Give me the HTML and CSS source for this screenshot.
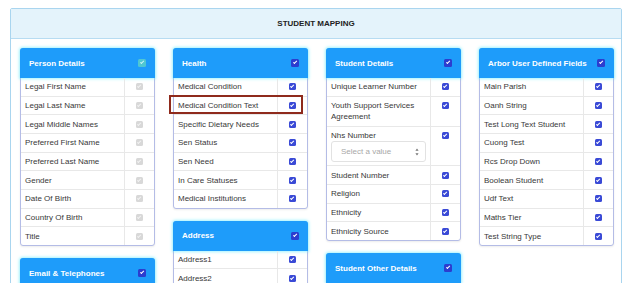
FILE: index.html
```html
<!DOCTYPE html>
<html lang="en">
<head>
    <meta charset="UTF-8">
    <meta name="viewport" content="width=device-width, initial-scale=1.0">
    <title>Student Mapping</title>
    <link rel="stylesheet" href="styles.css">
</head>
<body>
    <div class="panel">
        <div class="panel-head">STUDENT MAPPING</div>
        <div class="panel-body">

            <div class="column">
                <div class="card">
                    <div class="card-head"><span>Person Details</span><span class="cb teal"></span></div>
                    <table class="fields">
                        <tr><td>Legal First Name</td><td class="tick"><span class="cb off"></span></td></tr>
                        <tr><td>Legal Last Name</td><td class="tick"><span class="cb off"></span></td></tr>
                        <tr><td>Legal Middle Names</td><td class="tick"><span class="cb off"></span></td></tr>
                        <tr><td>Preferred First Name</td><td class="tick"><span class="cb off"></span></td></tr>
                        <tr><td>Preferred Last Name</td><td class="tick"><span class="cb off"></span></td></tr>
                        <tr><td>Gender</td><td class="tick"><span class="cb off"></span></td></tr>
                        <tr><td>Date Of Birth</td><td class="tick"><span class="cb off"></span></td></tr>
                        <tr><td>Country Of Birth</td><td class="tick"><span class="cb off"></span></td></tr>
                        <tr><td>Title</td><td class="tick"><span class="cb off"></span></td></tr>
                    </table>
                </div>
                <div class="card">
                    <div class="card-head"><span>Email &amp; Telephones</span><span class="cb"></span></div>
                </div>
            </div>

            <div class="column">
                <div class="card">
                    <div class="card-head"><span>Health</span><span class="cb"></span></div>
                    <table class="fields">
                        <tr><td>Medical Condition</td><td class="tick"><span class="cb"></span></td></tr>
                        <tr><td class="hl">Medical Condition Text</td><td class="tick"><span class="cb"></span></td></tr>
                        <tr><td>Specific Dietary Needs</td><td class="tick"><span class="cb"></span></td></tr>
                        <tr><td>Sen Status</td><td class="tick"><span class="cb"></span></td></tr>
                        <tr><td>Sen Need</td><td class="tick"><span class="cb"></span></td></tr>
                        <tr><td>In Care Statuses</td><td class="tick"><span class="cb"></span></td></tr>
                        <tr><td>Medical Institutions</td><td class="tick"><span class="cb"></span></td></tr>
                    </table>
                </div>
                <div class="card">
                    <div class="card-head"><span>Address</span><span class="cb"></span></div>
                    <table class="fields">
                        <tr><td>Address1</td><td class="tick"><span class="cb"></span></td></tr>
                        <tr><td>Address2</td><td class="tick"><span class="cb"></span></td></tr>
                    </table>
                </div>
            </div>

            <div class="column">
                <div class="card">
                    <div class="card-head"><span>Student Details</span><span class="cb"></span></div>
                    <table class="fields">
                        <tr><td>Unique Learner Number</td><td class="tick"><span class="cb"></span></td></tr>
                        <tr><td>Youth Support Services Agreement</td><td class="tick"><span class="cb"></span></td></tr>
                        <tr>
                            <td>Nhs Number
                                <div class="select">
                                    <span>Select a value</span>
                                    <svg width="4" height="8" viewBox="0 0 4 8"><path d="M2 0.5 L3.6 2.8 H0.4 Z M2 7.5 L3.6 5.2 H0.4 Z" fill="#777"/></svg>
                                </div>
                            </td>
                            <td class="tick"><span class="cb"></span></td>
                        </tr>
                        <tr><td>Student Number</td><td class="tick"><span class="cb"></span></td></tr>
                        <tr><td>Religion</td><td class="tick"><span class="cb"></span></td></tr>
                        <tr><td>Ethnicity</td><td class="tick"><span class="cb"></span></td></tr>
                        <tr><td>Ethnicity Source</td><td class="tick"><span class="cb"></span></td></tr>
                    </table>
                </div>
                <div class="card">
                    <div class="card-head"><span>Student Other Details</span><span class="cb"></span></div>
                </div>
            </div>

            <div class="column">
                <div class="card">
                    <div class="card-head"><span>Arbor User Defined Fields</span><span class="cb"></span></div>
                    <table class="fields">
                        <tr><td>Main Parish</td><td class="tick"><span class="cb"></span></td></tr>
                        <tr><td>Oanh String</td><td class="tick"><span class="cb"></span></td></tr>
                        <tr><td>Test Long Text Student</td><td class="tick"><span class="cb"></span></td></tr>
                        <tr><td>Cuong Test</td><td class="tick"><span class="cb"></span></td></tr>
                        <tr><td>Rcs Drop Down</td><td class="tick"><span class="cb"></span></td></tr>
                        <tr><td>Boolean Student</td><td class="tick"><span class="cb"></span></td></tr>
                        <tr><td>Udf Text</td><td class="tick"><span class="cb"></span></td></tr>
                        <tr><td>Maths Tier</td><td class="tick"><span class="cb"></span></td></tr>
                        <tr><td>Test String Type</td><td class="tick"><span class="cb"></span></td></tr>
                    </table>
                </div>
            </div>

        </div>
    </div>
</body>
</html>
```

FILE: styles.css
```css
body { margin: 0; height: 283px; overflow: hidden; font-family: "Liberation Sans", Arial, sans-serif; font-size: 8px; color: #383838; background: #fff; }

.panel { margin: 8px 3px 0 10px; border: 1px solid #a9d5ef; border-radius: 2px; }
.panel-head { height: 29px; display: flex; align-items: center; justify-content: center; background: #e4f3fb; border-bottom: 1px solid #b7dcf2; font-weight: bold; color: #222; }
.panel-body { display: grid; grid-template-columns: repeat(4, 135px); column-gap: 18px; align-items: start; padding: 9px 8px 0 9px; }

.column { display: flex; flex-direction: column; gap: 12px; }

.card { border: 1px solid #b4bce6; border-radius: 3px; background: #fff; box-shadow: 0 1px 2px rgba(0, 0, 0, 0.08); }
.card-head { height: 30px; margin: -1px -1px 0; padding: 0 9px; display: flex; align-items: center; justify-content: space-between; background: #1e9cfa; border-radius: 3px 3px 0 0; color: #fff; font-weight: bold; box-shadow: 0 0 3px 1px rgba(90, 235, 255, 0.55); }

.fields { width: 100%; border-collapse: collapse; table-layout: fixed; }
.fields td { padding: 3.2px 4px; line-height: 11.3px; vertical-align: top; border-bottom: 1px solid #e8e8e8; }
.fields tr:last-child td { border-bottom: 0; }
.fields td.tick { width: 30px; padding: 5.3px 0 0; border-left: 1px solid #e8e8e8; box-sizing: border-box; }

.cb { display: block; width: 7px; height: 7px; margin: 0 auto; border-radius: 1.5px; background: #3a4ad6; position: relative; }
.cb::after { content: ""; position: absolute; left: 2.4px; top: 0.9px; width: 1.4px; height: 3.1px; border: solid #fff; border-width: 0 1.1px 1.1px 0; transform: rotate(45deg); }
.cb.off { background: #d8d8d8; }
.cb.off::after { border-color: #f2f2f2; }
.card-head .cb { width: 8px; height: 8px; margin: 0; background: #2c3dcf; }
.card-head .cb::after { left: 2.8px; top: 1.2px; }
.card-head .cb.teal { background: #4fc7d2; }
.card-head .cb.teal::after { border-color: #c9f3f6; }

.select { height: 21px; padding: 0 6px 0 9px; display: flex; align-items: center; justify-content: space-between; box-sizing: border-box; border: 1px solid #e2e2e2; border-radius: 3px; color: #a8a8a8; }

.hl { position: relative; }
.hl::after { content: ""; position: absolute; left: -5px; top: -2px; width: 134px; height: 19px; box-sizing: border-box; border: 2px solid #8f2a1c; }
```
